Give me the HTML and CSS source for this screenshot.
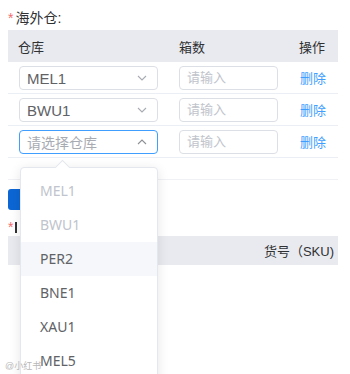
FILE: index.html
```html
<!DOCTYPE html>
<html lang="zh">
<head>
    <meta charset="UTF-8">
    <meta name="viewport" content="width=device-width, initial-scale=1.0">
    <title>海外仓</title>
    <link rel="stylesheet" href="styles.css">
</head>
<body>
    <div class="page">
        <div class="form-label"><span class="star">*</span>海外仓:</div>
        <table class="wh-table">
            <colgroup>
                <col class="col-wh">
                <col class="col-num">
                <col class="col-op">
            </colgroup>
            <thead>
                <tr>
                    <th>仓库</th>
                    <th>箱数</th>
                    <th>操作</th>
                </tr>
            </thead>
            <tbody>
                <tr>
                    <td>
                        <div class="select">
                            <span class="value">MEL1</span>
                            <svg class="arrow" width="10" height="6" viewBox="0 0 10 6"><polyline points="1,1 5,5 9,1" fill="none" stroke="#a8abb2" stroke-width="1.1"/></svg>
                        </div>
                    </td>
                    <td><div class="input">请输入</div></td>
                    <td><a class="link">删除</a></td>
                </tr>
                <tr>
                    <td>
                        <div class="select">
                            <span class="value">BWU1</span>
                            <svg class="arrow" width="10" height="6" viewBox="0 0 10 6"><polyline points="1,1 5,5 9,1" fill="none" stroke="#a8abb2" stroke-width="1.1"/></svg>
                        </div>
                    </td>
                    <td><div class="input">请输入</div></td>
                    <td><a class="link">删除</a></td>
                </tr>
                <tr>
                    <td>
                        <div class="select is-focus">
                            <span class="placeholder">请选择仓库</span>
                            <svg class="arrow" width="10" height="6" viewBox="0 0 10 6"><polyline points="1,5 5,1 9,5" fill="none" stroke="#8d9095" stroke-width="1.1"/></svg>
                        </div>
                    </td>
                    <td><div class="input">请输入</div></td>
                    <td><a class="link">删除</a></td>
                </tr>
            </tbody>
        </table>
        <div class="table-foot"></div>

        <button class="btn-primary"></button>

        <div class="form-label second"><span class="star">*</span><span class="label-cut"></span></div>
        <div class="sku-head">
            <span>货号（SKU)</span>
        </div>
    </div>

    <div class="dropdown">
        <div class="dropdown-arrow"></div>
        <ul class="options">
            <li class="disabled">MEL1</li>
            <li class="disabled">BWU1</li>
            <li class="hover">PER2</li>
            <li>BNE1</li>
            <li>XAU1</li>
            <li>MEL5</li>
        </ul>
    </div>

    <div class="watermark">@小红书</div>
</body>
</html>
```

FILE: styles.css
```css
body {
    margin: 0;
    font-family: "Liberation Sans", "Noto Sans CJK SC", sans-serif;
    color: #303133;
    background: #fff;
    overflow: hidden;
}

.page {
    padding: 9px 12px 0 8px;
}

.form-label {
    font-size: 14px;
    line-height: 18px;
    color: #303133;
    height: 21px;
}

.star {
    color: #f56c6c;
    margin-right: 2px;
    font-size: 14px;
}

.label-cut {
    display: inline-block;
    width: 2px;
    height: 11px;
    background: #303133;
    vertical-align: -1px;
}

.wh-table {
    width: 330px;
    border-collapse: collapse;
    table-layout: fixed;
    font-size: 13px;
}

.col-wh { width: 161px; }
.col-num { width: 120px; }
.col-op { width: 49px; }

.wh-table th {
    background: #e8eaf0;
    height: 32px;
    padding: 0 10px;
    text-align: left;
    font-weight: normal;
    color: #303133;
}

.wh-table th:last-child {
    padding: 0 0 0 10px;
}

.wh-table td {
    height: 30px;
    padding: 1px 10px 0 11px;
    border-bottom: 1px solid #ebeef5;
}

.wh-table td:nth-child(2) {
    padding-left: 10px;
}

.wh-table td:last-child {
    padding: 0 0 0 11px;
}

.select {
    width: 139px;
    height: 24px;
    box-sizing: border-box;
    border: 1px solid #dcdfe6;
    border-radius: 4px;
    display: flex;
    align-items: center;
    justify-content: space-between;
    padding: 0 10px 0 7px;
    font-size: 15px;
    color: #606266;
}

.select.is-focus {
    border-color: #409eff;
}

.placeholder {
    color: #a8abb2;
    font-size: 14px;
}

.input {
    width: 99px;
    height: 24px;
    box-sizing: border-box;
    border: 1px solid #dcdfe6;
    border-radius: 4px;
    padding: 0 7px;
    line-height: 22px;
    font-size: 13px;
    color: #c0c4cc;
}

.link {
    color: #409eff;
    font-size: 13px;
    cursor: pointer;
}

.table-foot {
    width: 330px;
    height: 21px;
    border-bottom: 1px solid #f0f1f4;
}

.btn-primary {
    display: block;
    margin-top: 9px;
    height: 21px;
    width: 60px;
    border: none;
    border-radius: 3px;
    background: #0c66d4;
}

.form-label.second {
    margin-top: 8px;
    height: 18px;
}

.sku-head {
    width: 330px;
    height: 29px;
    background: #e8eaf0;
    display: flex;
    align-items: center;
    justify-content: flex-end;
    padding-right: 4px;
    box-sizing: border-box;
    font-size: 13px;
    color: #303133;
}

.dropdown {
    position: absolute;
    left: 20px;
    top: 167px;
    width: 138px;
    height: 240px;
    background: #fff;
    border: 1px solid #e4e7ed;
    border-radius: 4px;
    box-shadow: 0 2px 12px rgba(0, 0, 0, 0.1);
    box-sizing: border-box;
}

.dropdown-arrow {
    position: absolute;
    top: -6px;
    left: 36px;
    width: 10px;
    height: 10px;
    background: #fff;
    border-left: 1px solid #e4e7ed;
    border-top: 1px solid #e4e7ed;
    transform: rotate(45deg);
}

.options {
    list-style: none;
    margin: 0;
    padding: 6px 0;
}

.options li {
    height: 34px;
    line-height: 34px;
    padding-left: 19px;
    font-family: "Noto Sans", "Noto Sans CJK SC", sans-serif;
    font-size: 14px;
    color: #606266;
}

.options li.disabled {
    color: #c0c4cc;
}

.options li.hover {
    background: #f5f7fa;
}

.watermark {
    position: absolute;
    left: 5px;
    top: 359px;
    font-size: 9px;
    color: #b8b8b8;
}
```
